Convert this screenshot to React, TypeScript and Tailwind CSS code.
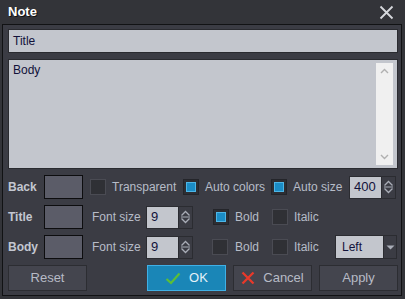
import { type ReactNode } from "react";

const FONT = { fontFamily: '"Liberation Sans", Arial, sans-serif' };

function Check({ on = false, className = "" }: { on?: boolean; className?: string }) {
  return (
    <span
      className={
        "flex h-[16px] w-[16px] shrink-0 items-center justify-center border " +
        (on ? "border-[#24252a] bg-[#2d2e33] " : "border-[#4a4b53] bg-[#2f3035] ") +
        className
      }
    >
      {on && <span className="h-[10px] w-[10px] border border-[#4fb6e6] bg-[#1b8dc6]" />}
    </span>
  );
}

function SpinArrows() {
  return (
    <svg width="11" height="16" viewBox="0 0 11 16">
      <path d="M1.5 6.5 L5.5 2.5 L9.5 6.5" fill="none" stroke="#a9adb7" strokeWidth="1.3" />
      <path d="M1 8 H10" stroke="#a9adb7" strokeWidth="1" />
      <path d="M1.5 9.5 L5.5 13.5 L9.5 9.5" fill="none" stroke="#a9adb7" strokeWidth="1.3" />
    </svg>
  );
}

function Spin({ value, w }: { value: string; w: number }) {
  return (
    <div className="flex h-[23px] shrink-0 border border-[#2b2c31]" style={{ width: w }}>
      <div className="flex flex-1 items-center bg-[#c3c6cd] pl-[4px] text-[13px] text-[#12123a]">{value}</div>
      <div className="flex w-[14px] items-center justify-center border-l border-[#2b2c31] bg-[#3b3c44]">
        <SpinArrows />
      </div>
    </div>
  );
}

function Label({ children, w, className = "" }: { children: ReactNode; w: number; className?: string }) {
  return (
    <span
      className={"shrink-0 whitespace-nowrap text-[12px] text-[#b7bcc8] " + className}
      style={{ width: w }}
    >
      {children}
    </span>
  );
}

function Swatch() {
  return <div className="h-[24px] w-[39px] shrink-0 border border-[#0d0d0f] bg-[#5b5c68]" />;
}

function RowLabel({ children }: { children: ReactNode }) {
  return <span className="w-[36px] shrink-0 text-[12px] font-bold text-[#c3c7d1]">{children}</span>;
}

function Button({ children, primary = false }: { children: ReactNode; primary?: boolean }) {
  return (
    <button
      className={
        "flex h-[26px] w-[79px] items-center justify-center gap-[8px] border text-[13px] " +
        (primary
          ? "border-[#3fb0e6] bg-[#1a86b7] text-[#e4f1f8]"
          : "border-[#2c2d32] bg-[#44454e] text-[#b7bbc6]")
      }
    >
      {children}
    </button>
  );
}

export default function App() {
  return (
    <div style={FONT} className="flex h-[299px] w-[405px] flex-col bg-[#333439] pb-[3px] pl-[2px] pr-[3px]">
      <div className="flex h-[24px] shrink-0 items-center justify-between pl-[6px] pr-[8px]">
        <span className="text-[13px] font-bold text-white [text-shadow:1px_1px_0_#111]">Note</span>
        <svg width="15" height="15" viewBox="0 0 15 15">
          <path d="M1.5 1.5 L13.5 13.5 M13.5 1.5 L1.5 13.5" stroke="#d6d8dc" strokeWidth="1.8" />
        </svg>
      </div>

      <div className="flex flex-1 flex-col border border-[#111214] bg-[#3b3c44] pb-[4px] pl-[5px] pr-[3px] pt-[4px]">
        <div className="flex h-[24px] items-center border border-[#2a2b30] bg-[#c3c6cd] pl-[4px] text-[12px] text-[#12123a]">
          Title
        </div>

        <div className="mt-[6px] flex h-[110px] border border-[#2a2b30] bg-[#c3c6cd] py-[3px] pl-[4px] pr-[4px]">
          <span className="-mt-[2px] flex-1 text-[12px] text-[#12123a]">Body</span>
          <div className="flex w-[17px] flex-col items-center justify-between bg-[#f0f0f0] py-[5px]">
            <svg width="9" height="6" viewBox="0 0 9 6">
              <path d="M1 5 L4.5 1.5 L8 5" fill="none" stroke="#b0b0b0" strokeWidth="1.4" />
            </svg>
            <svg width="9" height="6" viewBox="0 0 9 6">
              <path d="M1 1 L4.5 4.5 L8 1" fill="none" stroke="#b0b0b0" strokeWidth="1.4" />
            </svg>
          </div>
        </div>

        <div className="mt-[6px] flex h-[24px] items-center">
          <RowLabel>Back</RowLabel>
          <Swatch />
          <Check className="ml-[7px]" />
          <Label w={71} className="ml-[6px]">Transparent</Label>
          <Check on />
          <Label w={66} className="ml-[6px]">Auto colors</Label>
          <Check on />
          <Label w={56} className="ml-[6px]">Auto size</Label>
          <Spin value="400" w={47} />
        </div>

        <div className="mt-[6px] flex h-[24px] items-center">
          <RowLabel>Title</RowLabel>
          <Swatch />
          <Label w={54} className="ml-[9px]">Font size</Label>
          <Spin value="9" w={47} />
          <Check on className="ml-[20px]" />
          <Label w={37} className="ml-[6px]">Bold</Label>
          <Check />
          <Label w={40} className="ml-[6px]">Italic</Label>
        </div>

        <div className="mt-[6px] flex h-[24px] items-center">
          <RowLabel>Body</RowLabel>
          <Swatch />
          <Label w={54} className="ml-[9px]">Font size</Label>
          <Spin value="9" w={47} />
          <Check className="ml-[19px]" />
          <Label w={37} className="ml-[7px]">Bold</Label>
          <Check />
          <Label w={41} className="ml-[6px]">Italic</Label>
          <div className="flex h-[24px] w-[62px] shrink-0 border border-[#2b2c31]">
            <div className="flex flex-1 items-center bg-[#c3c6cd] pl-[6px] text-[12px] text-[#12123a]">Left</div>
            <div className="flex w-[13px] items-center justify-center border-l border-[#2b2c31] bg-[#3b3c44]">
              <svg width="9" height="5" viewBox="0 0 9 5">
                <path d="M0.5 0.5 H8.5 L4.5 4.5 Z" fill="#a9adb7" />
              </svg>
            </div>
          </div>
        </div>

        <div className="mt-[6px] flex h-[26px] items-center">
          <Button>Reset</Button>
          <div className="ml-auto flex gap-[7px]">
            <Button primary>
              <svg width="16" height="13" viewBox="0 0 16 13">
                <path d="M1.5 7 L6 11 L14.5 1.5" fill="none" stroke="#5cbf36" strokeWidth="2.2" />
              </svg>
              OK
            </Button>
            <Button>
              <svg width="14" height="14" viewBox="0 0 14 14">
                <path d="M1.5 1.5 L12.5 12.5 M12.5 1.5 L1.5 12.5" stroke="#e8392a" strokeWidth="2.3" />
              </svg>
              Cancel
            </Button>
            <Button>Apply</Button>
          </div>
        </div>
      </div>
    </div>
  );
}
